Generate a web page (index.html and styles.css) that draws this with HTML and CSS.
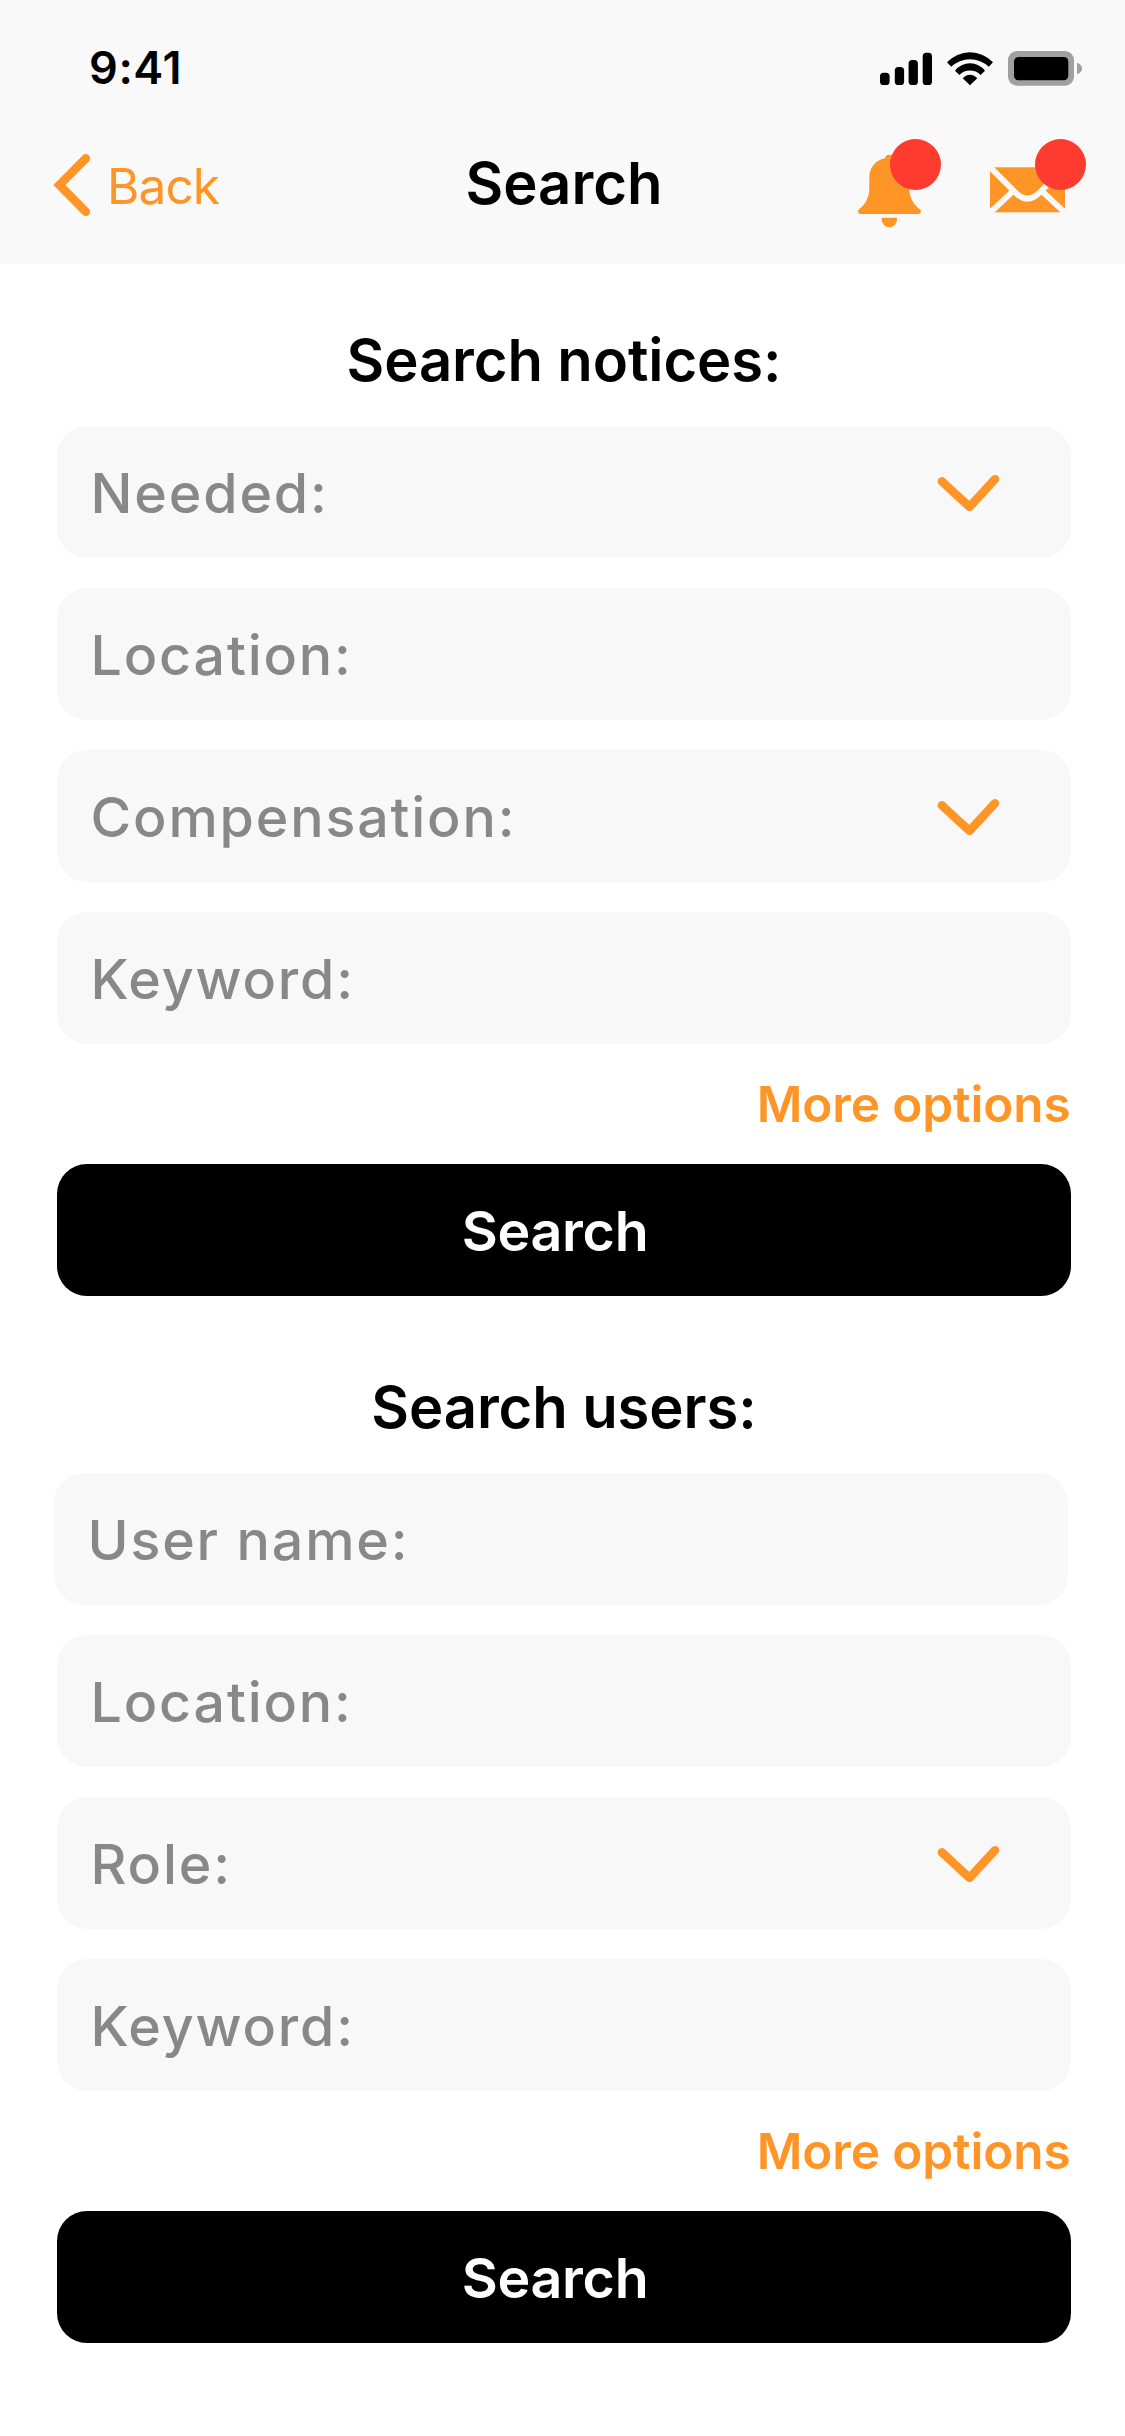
FILE: index.html
```html
<!DOCTYPE html>
<html lang="en">
<head>
<meta charset="utf-8">
<title>Search</title>
<link rel="stylesheet" href="styles.css">
</head>
<body>
<header class="header">
  <div class="status">
    <span class="time">9:41</span>
    <svg class="status-icons" viewBox="876 45 210 46" width="210" height="46" aria-hidden="true">
      <rect x="880" y="72.7" width="9.6" height="12.3" rx="3.6"/>
      <rect x="894.8" y="67" width="9.3" height="18" rx="3.6"/>
      <rect x="908.6" y="60" width="9.3" height="25" rx="3.6"/>
      <rect x="922.7" y="52.7" width="9.3" height="32.3" rx="3.6"/>
      <path d="M947 62.3A31.5 31.5 0 0 1 993 62.3L988.8 66.7A27.3 27.3 0 0 0 951.2 66.7Z"/>
      <path d="M955 70.7A19 19 0 0 1 985 70.7L980.6 74.9A14.7 14.7 0 0 0 959.4 74.9Z"/>
      <path d="M962.7 78.3A9.2 9.2 0 0 1 977.3 78.3L970 85.3Z"/>
      <rect class="gray" x="1008" y="51" width="66" height="34.7" rx="9"/>
      <rect x="1014" y="57" width="54.3" height="23.3" rx="4.5"/>
      <path class="gray" d="M1077 62.7C1083.7 65 1083.7 72 1077 74.3Z"/>
    </svg>
  </div>
  <nav class="nav">
    <a class="back">
      <svg class="back-icon" viewBox="50 150 44 70" width="44" height="70" aria-hidden="true"><path d="M85.8 158.4L59.4 185L85.8 211.8"/></svg>
      <span>Back</span>
    </a>
    <h1 class="title">Search</h1>
    <div class="actions">
      <span class="action">
        <svg class="icon" viewBox="857 150 66 80" width="66" height="80" aria-hidden="true">
          <path d="M885 158.2A4.4 4.4 0 0 1 893.6 158.2C903.5 160.5 909.3 167.5 909.3 177.5V188C909.3 198 913.5 204.5 919.8 209.2C922 211.2 920.8 214 918.2 214H860.8C858.2 214 857 211.2 859.2 209.2C865.3 204.5 869.3 198 869.3 188V177.5C869.3 167.5 875 160.5 885 158.2Z"/>
          <path d="M881.7 217.7H897V219.5A7.65 7.65 0 0 1 881.7 219.5Z"/>
        </svg>
        <span class="badge"></span>
      </span>
      <span class="action mail">
        <svg class="icon" viewBox="990 150 75 80" width="75" height="80" aria-hidden="true">
          <rect x="990" y="167.3" width="75" height="45"/>
          <path class="fold" d="M986 163.2L1016 193.2Q1027.5 204.2 1039 193.2L1069 163.2M986 216.6L1011.7 192.3M1069 216.6L1043.3 192.3"/>
        </svg>
        <span class="badge"></span>
      </span>
    </div>
  </nav>
</header>
<main class="main">
  <section class="section">
    <h2 class="heading">Search notices:</h2>
    <div class="fields">
      <div class="field"><span>Needed:</span><svg class="chevron" viewBox="935 470 66 48" width="66" height="48" aria-hidden="true"><path d="M941.9 481.3L969.5 506.8L995 479.2"/></svg></div>
      <div class="field"><span>Location:</span></div>
      <div class="field"><span>Compensation:</span><svg class="chevron" viewBox="935 470 66 48" width="66" height="48" aria-hidden="true"><path d="M941.9 481.3L969.5 506.8L995 479.2"/></svg></div>
      <div class="field"><span>Keyword:</span></div>
    </div>
    <a class="more">More options</a>
    <div class="button">Search</div>
  </section>
  <section class="section">
    <h2 class="heading">Search users:</h2>
    <div class="fields">
      <div class="field shifted"><span>User name:</span></div>
      <div class="field"><span>Location:</span></div>
      <div class="field"><span>Role:</span><svg class="chevron" viewBox="935 470 66 48" width="66" height="48" aria-hidden="true"><path d="M941.9 481.3L969.5 506.8L995 479.2"/></svg></div>
      <div class="field"><span>Keyword:</span></div>
    </div>
    <a class="more">More options</a>
    <div class="button">Search</div>
  </section>
</main>
</body>
</html>
```

FILE: styles.css
```css
* { box-sizing: border-box; }
body {
  margin: 0;
  width: 1125px;
  min-height: 2436px;
  background: #fff;
  color: #000;
  font-family: Inter, "Liberation Sans", sans-serif;
}
svg { display: block; flex: none; }
h1, h2 { margin: 0; font-weight: 600; font-size: 58px; }

.header { height: 264px; background: #f9f9f9; }
.status {
  display: flex;
  justify-content: space-between;
  align-items: flex-start;
  height: 132px;
  padding: 0 39px 0 89px;
}
.time { font-size: 45px; font-weight: 600; line-height: 135px; letter-spacing: 0.6px; }
.status-icons { margin-top: 45px; }
.gray { fill: #a0a0a0; }

.nav { display: flex; align-items: flex-start; height: 132px; }
.back {
  display: flex;
  width: 444px;
  padding-left: 50px;
  gap: 13px;
  color: #ff9526;
  font-size: 49.5px;
  line-height: 108px;
  letter-spacing: -0.9px;
}
.back-icon { margin-top: 18px; }
.back-icon path, .chevron path {
  fill: none;
  stroke: #ff9526;
  stroke-width: 8.6;
  stroke-linecap: round;
}
.title { width: 240px; line-height: 102px; text-align: center; }
.actions { display: flex; gap: 67px; padding: 18px 0 0 173px; }
.action { position: relative; }
.icon { fill: #ff9526; }
.fold { fill: none; stroke: #f9f9f9; stroke-width: 5.8; }
.badge {
  position: absolute;
  left: 32.5px;
  top: -11.5px;
  width: 51px;
  height: 51px;
  border-radius: 50%;
  background: #ff3b30;
}
.mail .badge { left: 45px; }

.main { padding: 0 54px 0 57px; }
.section + .section { margin-top: 15px; }
.heading { padding: 60px 0 30px; line-height: 72px; text-align: center; letter-spacing: -0.1px; }
.fields { display: flex; flex-direction: column; gap: 30px; }
.field {
  display: flex;
  justify-content: space-between;
  height: 132px;
  padding: 0 70px 0 33.5px;
  border-radius: 30px;
  background: #f8f8f8;
  color: #888;
  font-size: 55.5px;
  font-weight: 500;
  line-height: 133px;
  letter-spacing: 1.85px;
}
.shifted { margin: 0 3px 0 -3px; }
.chevron { margin-top: 44px; }
.chevron path { stroke-linejoin: round; }
.more {
  display: block;
  padding-right: 0.5px;
  color: #ff9526;
  font-size: 49.5px;
  font-weight: 600;
  line-height: 120px;
  letter-spacing: -0.12px;
  text-align: right;
}
.button {
  height: 132px;
  padding-right: 18px;
  border-radius: 30px;
  background: #000;
  color: #fff;
  font-size: 55.5px;
  font-weight: 600;
  line-height: 133px;
  letter-spacing: -0.3px;
  text-align: center;
}
```
